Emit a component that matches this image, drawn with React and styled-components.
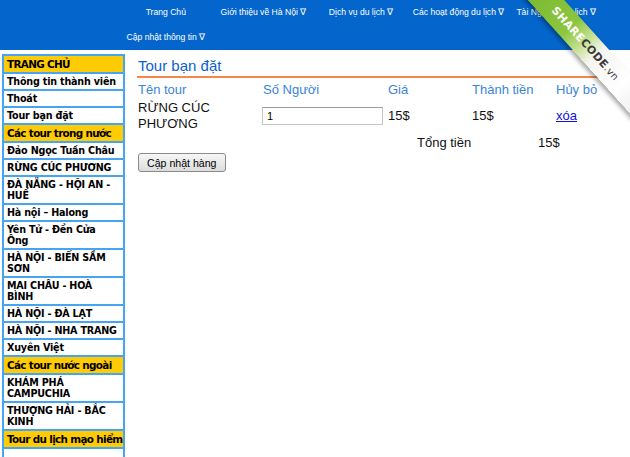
import styled, { createGlobalStyle } from "styled-components";

const GlobalStyle = createGlobalStyle`
  body {
    margin: 0;
    background: #fff;
    font-family: "Liberation Sans", Arial, sans-serif;
  }
`;

const navItems = [
  "Trang Chủ",
  "Giới thiệu về Hà Nội ∇",
  "Dịch vụ du lịch ∇",
  "Các hoạt động du lịch ∇",
  "Tài Nguyên du lịch ∇",
  "Cập nhật thông tin ∇",
];

// lines are given as they wrap in the narrow menu column
const menu = [
  { lines: ["TRANG CHỦ"], head: true },
  { lines: ["Thông tin thành viên"] },
  { lines: ["Thoát"] },
  { lines: ["Tour bạn đặt"] },
  { lines: ["Các tour trong nước"], head: true },
  { lines: ["Đảo Ngọc Tuần Châu"] },
  { lines: ["RỪNG CÚC PHƯƠNG"] },
  { lines: ["ĐÀ NẴNG - HỘI AN -", "HUẾ"] },
  { lines: ["Hà nội – Halong"] },
  { lines: ["Yên Tử - Đền Cửa", "Ông"] },
  { lines: ["HÀ NỘI - BIỂN SẦM", "SƠN"] },
  { lines: ["MAI CHÂU - HOÀ", "BÌNH"] },
  { lines: ["HÀ NỘI - ĐÀ LẠT"] },
  { lines: ["HÀ NỘI - NHA TRANG"] },
  { lines: ["Xuyên Việt"] },
  { lines: ["Các tour nước ngoài"], head: true },
  { lines: ["KHÁM PHÁ", "CAMPUCHIA"] },
  { lines: ["THƯỢNG HẢI - BẮC", "KINH"] },
  { lines: ["Tour du lịch mạo hiểm"], head: true },
];

function App() {
  return (
    <Page>
      <GlobalStyle />
      <Header>
        <NavList>
          {navItems.map((item) => (
            <NavItem key={item}>{item}</NavItem>
          ))}
        </NavList>
      </Header>

      <Ribbon>
        <RibbonBand>
          <b>SHARE</b>
          <span>CODE</span>
          <small>.vn</small>
        </RibbonBand>
      </Ribbon>

      <Main>
        <Sidebar>
          {menu.map((m) => (
            <MenuItem key={m.lines.join(" ")} $head={m.head}>
              {m.lines.map((l) => (
                <MenuLine key={l}>{l}</MenuLine>
              ))}
            </MenuItem>
          ))}
          <MenuItem />
        </Sidebar>

        <Content>
          <Title>Tour bạn đặt</Title>
          <CartRow>
            <HeadCell>Tên tour</HeadCell>
            <HeadCell>Số Người</HeadCell>
            <HeadCell>Giá</HeadCell>
            <HeadCell>Thành tiền</HeadCell>
            <HeadCell>Hủy bỏ</HeadCell>
          </CartRow>
          <CartRow $item>
            <Cell>RỪNG CÚC PHƯƠNG</Cell>
            <Cell>
              <QtyInput defaultValue="1" />
            </Cell>
            <Cell>15$</Cell>
            <Cell>15$</Cell>
            <Cell>
              <RemoveLink href="#">xóa</RemoveLink>
            </Cell>
          </CartRow>
          <TotalRow>
            <Cell>Tổng tiền</Cell>
            <Cell>15$</Cell>
          </TotalRow>
          <UpdateButton>Cập nhật hàng</UpdateButton>
        </Content>
      </Main>
    </Page>
  );
}

const Page = styled.div`
  position: relative;
  width: 630px;
  height: 457px;
  overflow: hidden;
`;

const Header = styled.header`
  background: #0466cc;
  height: 50px;
  padding-left: 117px;
`;

const NavList = styled.ul`
  display: flex;
  flex-wrap: wrap;
  width: 490px;
  margin: 0;
  padding: 0;
  list-style: none;
`;

const NavItem = styled.li`
  width: 97.6px;
  height: 25px;
  line-height: 25px;
  text-align: center;
  color: #fff;
  font-size: 8.6px;
  white-space: nowrap;
`;

const Ribbon = styled.div`
  position: absolute;
  top: 0;
  right: 0;
  width: 110px;
  height: 130px;
  overflow: hidden;
  pointer-events: none;
`;

const RibbonBand = styled.div`
  position: absolute;
  left: -52px;
  top: 22px;
  width: 220px;
  height: 27px;
  transform: rotate(48deg);
  background: linear-gradient(
    to right,
    #6fae23 0%,
    #8cc63f 45%,
    #c9e39a 55%,
    #f4f4f0 62%,
    #ffffff 80%,
    #e6e6e6 100%
  );
  box-shadow: 0 3px 4px rgba(0, 0, 0, 0.35);
  display: flex;
  align-items: center;
  justify-content: center;
  padding-left: 22px;
  box-sizing: border-box;
  font-family: "DejaVu Sans", sans-serif;
  font-size: 11px;
  font-weight: bold;
  letter-spacing: 0.3px;

  b {
    color: #fff;
  }
  span {
    color: #3a3a3a;
  }
  small {
    color: #3a3a3a;
    font-size: 10px;
    font-weight: normal;
  }
`;

const Main = styled.div`
  display: flex;
  align-items: flex-start;
  gap: 12px;
  padding: 4px 0 0 2px;
`;

const Sidebar = styled.nav`
  width: 119px;
  flex-shrink: 0;
  border: 2px solid #45a5f2;
  border-bottom: none;
`;

const MenuItem = styled.div`
  min-height: 11px;
  padding: 2px 0 2px 3px;
  line-height: ${(p) => (p.$head ? "12px" : "11px")};
  border-bottom: 2px solid #45a5f2;
  background: ${(p) => (p.$head ? "#fecb05" : "#fff")};
  color: #000;
  font-family: "DejaVu Sans", Verdana, sans-serif;
  font-weight: bold;
  font-size: ${(p) => (p.$head ? "10.4px" : "9.6px")};
  letter-spacing: ${(p) => (p.$head ? "-0.65px" : "-0.2px")};
  overflow: hidden;
`;

const MenuLine = styled.div`
  white-space: nowrap;
`;

const Content = styled.main`
  width: 473px;
`;

const Title = styled.h2`
  margin: 0;
  padding: 2px 0 0 1px;
  line-height: 20px;
  font-size: 15px;
  font-weight: normal;
  color: #0d5fd0;
  border-bottom: 2px solid #f5884a;
`;

const CartRow = styled.div`
  display: grid;
  grid-template-columns: 125px 125px 84px 84px 1fr;
  align-items: center;
  padding: ${(p) => (p.$item ? "2px 0 2px 1px" : "4px 0 0 1px")};
  line-height: 16px;
  font-size: 13px;
`;

const HeadCell = styled.div`
  color: #3a84d8;
`;

const Cell = styled.div`
  color: #111;
`;

const QtyInput = styled.input`
  box-sizing: border-box;
  width: 121px;
  height: 18px;
  margin-left: -1px;
  padding: 0 4px;
  border: 1px solid #c4c4c4;
  border-top-color: #9c9c9c;
  font-family: "Liberation Sans", Arial, sans-serif;
  font-size: 11px;
  color: #000;
  outline: none;
`;

const RemoveLink = styled.a`
  color: #1010e0;
  text-decoration: underline;
`;

const TotalRow = styled.div`
  display: grid;
  grid-template-columns: 121px auto;
  padding: 1px 0 0 280px;
  line-height: 16px;
  font-size: 13px;
`;

const UpdateButton = styled.button`
  margin: 2px 0 0 1px;
  height: 19px;
  padding: 0 8px;
  border: 1px solid #8a8a8a;
  border-radius: 3px;
  background: linear-gradient(#f7f7f7, #dcdcdc);
  font-family: "Liberation Sans", Arial, sans-serif;
  font-size: 10.6px;
  color: #000;
  cursor: pointer;
`;

export default App;
